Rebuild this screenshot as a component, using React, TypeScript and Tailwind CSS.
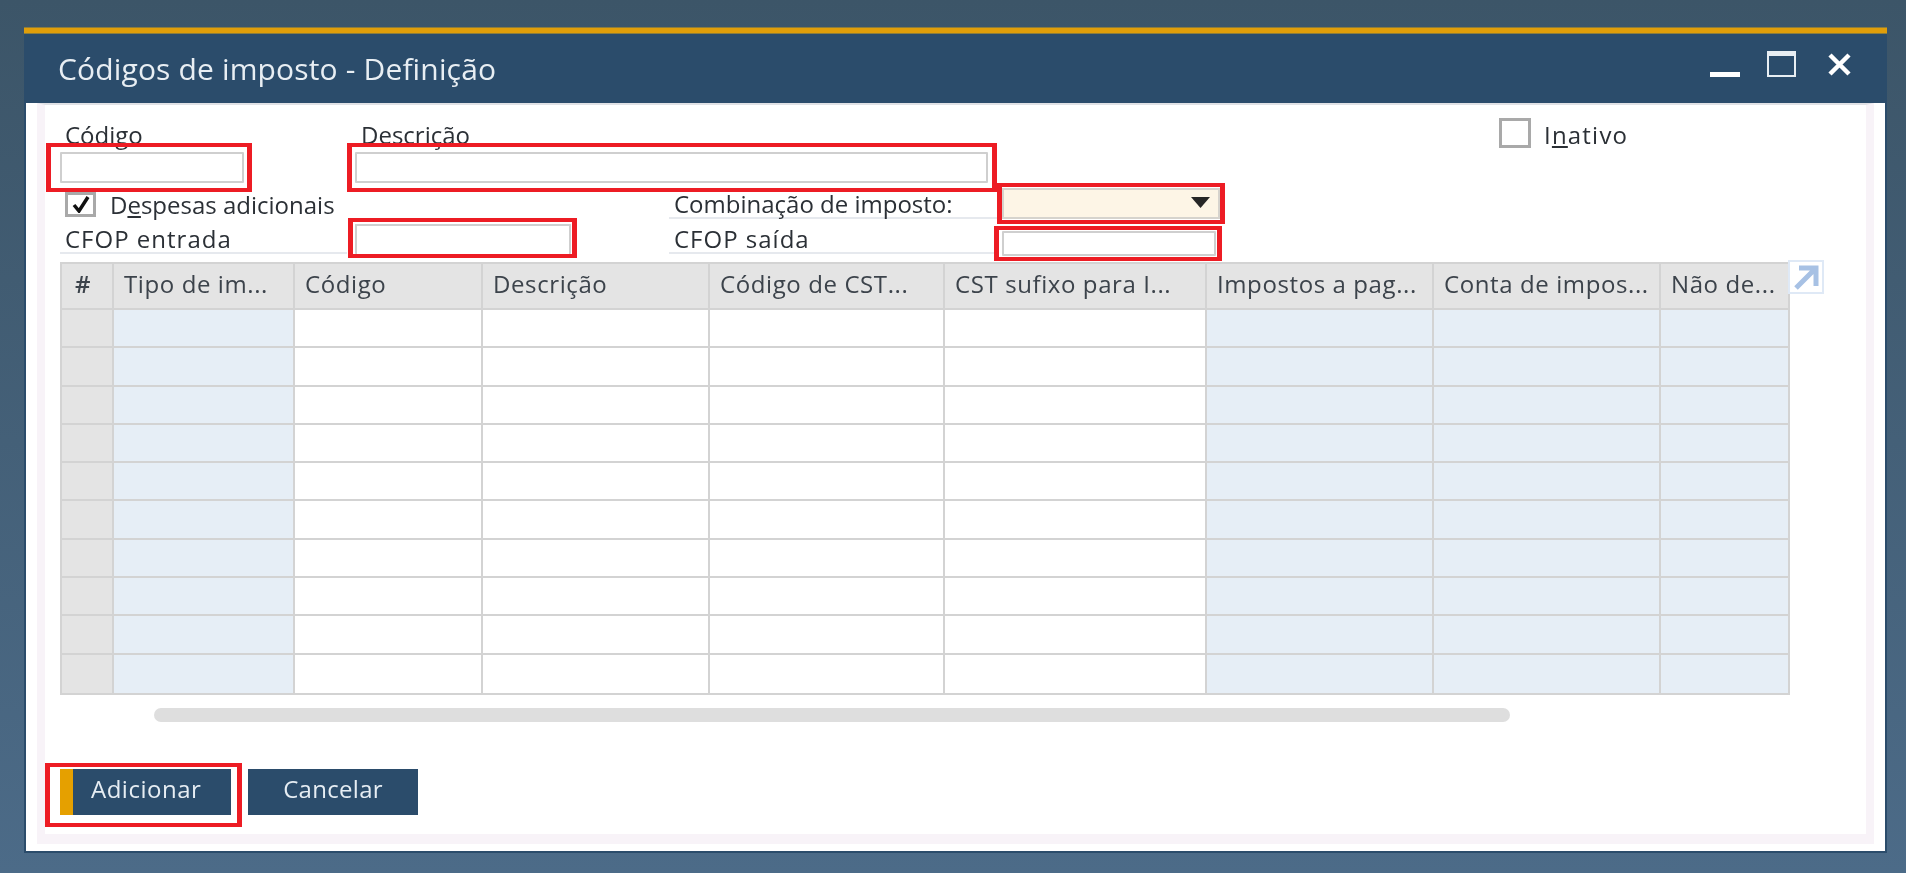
import React from "react";

const font = "font-['Open_Sans','Noto_Sans',sans-serif]";

const columns = [
  { label: "#", center: true, tint: "bg-[#e4e4e4]" },
  { label: "Tipo de im...", tint: "bg-[#e6eef6]" },
  { label: "Código", tint: "bg-white" },
  { label: "Descrição", tint: "bg-white" },
  { label: "Código de CST...", tint: "bg-white" },
  { label: "CST sufixo para I...", tint: "bg-white" },
  { label: "Impostos a pag...", tint: "bg-[#e6eef6]" },
  { label: "Conta de impos...", tint: "bg-[#e6eef6]" },
  { label: "Não de...", tint: "bg-[#e6eef6]" },
];

const rows = [0, 1, 2, 3, 4, 5, 6, 7, 8, 9];

// red marks drawn on top of the form
const marks = [
  "left-[22px] top-[116px] w-[206px] h-[49px]",
  "left-[323px] top-[116px] w-[650px] h-[49px]",
  "left-[973px] top-[156px] w-[228px] h-[41px]",
  "left-[970px] top-[199px] w-[228px] h-[35px]",
  "left-[324px] top-[191px] w-[229px] h-[40px]",
  "left-[21px] top-[736px] w-[197px] h-[64px]",
];

const Field = ({ className }: { className: string }) => (
  <div className={`bg-white border-2 border-[#cfcfcf] rounded-[1px] ${className}`} />
);

const LinedLabel = ({ children, className }: { children: React.ReactNode; className: string }) => (
  <div className={`h-full border-b-2 border-[#e6e9ee] pl-[5px] text-[24px] leading-[27px] text-[#2b3036] whitespace-nowrap ${className}`}>
    {children}
  </div>
);

const Grid = () => (
  <div className="w-[1730px] border-2 border-[#d3d3d3] grid grid-cols-[52px_181px_188px_227px_235px_262px_227px_227px_127px]">
    {columns.map((c, i) => (
      <div
        key={c.label}
        className={`h-[46px] bg-[#e4e4e4] border-b-2 border-[#d3d3d3] text-[24px] leading-[40px] tracking-[0.6px] text-[#3c434b] whitespace-nowrap ${
          i < columns.length - 1 ? "border-r-2" : ""
        } ${c.center ? "pl-[13px] font-semibold text-[22px]" : "pl-[10px]"}`}
      >
        {c.label}
      </div>
    ))}
    {rows.map((r) =>
      columns.map((c, i) => (
        <div
          key={`${r}-${i}`}
          className={`h-[38.3px] border-[#d3d3d3] ${c.tint} ${i < columns.length - 1 ? "border-r-2" : ""} ${
            r < rows.length - 1 ? "border-b-2" : ""
          }`}
        />
      ))
    )}
  </div>
);

export default function App() {
  return (
    <div className={`h-screen w-full overflow-hidden bg-gradient-to-b from-[#3c5568] to-[#4c6b88] pt-[27px] pl-[24px] ${font}`}>
      <div className="relative w-[1863px] h-[826px] flex flex-col blur-[0.7px]">
        {/* title bar */}
        <div className="h-[7px] shrink-0 bg-[#e09e0a] border-y border-[#8c7d3c]" />
        <div className="h-[69px] shrink-0 bg-[#2b4c6b] flex items-center justify-between pl-[34px] pr-[35px]">
          <span className="text-[30px] tracking-[0.15px] text-[#e8eef3] whitespace-nowrap">Códigos de imposto - Definição</span>
          <div className="flex items-start h-[26px] -mt-[10px]">
            <div className="w-[30px] h-[5px] bg-white mt-[21px]" />
            <div className="w-[29px] h-[26px] ml-[27px] border-2 border-t-[5px] border-[#e8eef3]" />
            <svg className="ml-[31px] mt-[2px]" width="25" height="23" viewBox="0 0 25 23">
              <path d="M3 2 L22 21 M22 2 L3 21" stroke="#ffffff" strokeWidth="4.5" fill="none" />
            </svg>
          </div>
        </div>

        {/* body */}
        <div className="flex-1 min-h-0 bg-white border-x-2 border-b-2 border-[#2b4c6b] pl-[11px] pr-[11px] pb-[7px]">
          <div className="h-full border-x-8 border-b-[10px] border-[#f8f3f8] border-t-2 border-t-[#e0e1e5] bg-white pl-[15px] pt-[13px]">
            {/* code and description */}
            <div className="h-[34px] flex text-[24px] text-[#2b3036]">
              <div className="w-[301px] pl-[5px] pt-[3px] leading-[27px]">Código</div>
              <div className="w-[1138px] pt-[3px] leading-[27px]">Descrição</div>
              <div className="w-[32px] h-[30px] border-[3px] border-[#a9a9a9] bg-white" />
              <div className="ml-[13px] pt-[3px] leading-[27px] tracking-[1.2px]">
                I<u>n</u>ativo
              </div>
            </div>
            <div className="h-[31px] flex">
              <Field className="w-[184px] h-full" />
              <Field className="w-[633px] h-full ml-[111px]" />
            </div>

            {/* options */}
            <div className="h-[36px] mt-[5px] flex">
              <div className="w-[287px] h-[31px] pl-[5px] flex items-start">
                <div className="w-[31px] h-[25px] mt-[4px] border-[3px] border-[#a9a9a9] bg-white flex items-center justify-center">
                  <svg width="18" height="17" viewBox="0 0 18 17">
                    <path d="M2 9 L7 15 L16 1" stroke="#111111" strokeWidth="3.5" fill="none" />
                  </svg>
                </div>
                <span className="ml-[14px] mt-[3px] text-[24px] leading-[27px] text-[#2b3036] whitespace-nowrap">
                  D<u>e</u>spesas adicionais
                </span>
              </div>
              <div className="w-[322px]" />
              <div className="w-[328px] h-[31px]">
                <LinedLabel className="pt-[2px]">Combinação de imposto:</LinedLabel>
              </div>
              <div className="w-[218px] h-[31px] ml-[5px] bg-[#fdf5e6] border-2 border-[#d6d3cd] flex justify-end pr-[8px] pt-[7px]">
                <svg width="19" height="11" viewBox="0 0 19 11">
                  <path d="M0 0 H19 L9.5 11 Z" fill="#262626" />
                </svg>
              </div>
            </div>

            <div className="h-[30px] flex">
              <div className="w-[287px] h-full">
                <LinedLabel className="pt-[1px] tracking-[1px]">CFOP entrada</LinedLabel>
              </div>
              <div className="w-[322px] pl-[8px]">
                <Field className="w-[216px] h-[30px] border-b-0" />
              </div>
              <div className="w-[325px] h-full">
                <LinedLabel className="pt-[1px] tracking-[1px]">CFOP saída</LinedLabel>
              </div>
              <Field className="w-[214px] h-[25px] ml-[8px] mt-[7px]" />
            </div>

            {/* matrix */}
            <div className="flex items-start mt-[8px]">
              <Grid />
              <div className="-ml-[2px] -mt-[2px] w-[36px] h-[34px] border-2 border-[#dfe9f6] bg-white flex items-center justify-center">
                <svg width="26" height="26" viewBox="0 0 26 26">
                  <path d="M3 24 L22 5 M6 4 H23 V22" stroke="#a7c1e4" strokeWidth="5" fill="none" />
                </svg>
              </div>
            </div>

            <div className="ml-[94px] mt-[13px] w-[1356px] h-[14px] rounded-full bg-[#dedede]" />

            {/* actions */}
            <div className="flex mt-[47px] gap-[17px] text-[24px] text-[#e6edf3]">
              <div className="w-[171px] h-[46px] bg-[#2b4c6b] border-l-[13px] border-[#e5a000] pl-[18px] leading-[40px] tracking-[0.5px]">
                Adicionar
              </div>
              <div className="w-[170px] h-[46px] bg-[#2b4c6b] text-center leading-[40px] tracking-[0.3px]">Cancelar</div>
            </div>
          </div>
        </div>

        {marks.map((m) => (
          <div key={m} className={`absolute border-x-[5px] border-y-[4px] border-[#ed1c24] ${m}`} />
        ))}
      </div>
    </div>
  );
}
